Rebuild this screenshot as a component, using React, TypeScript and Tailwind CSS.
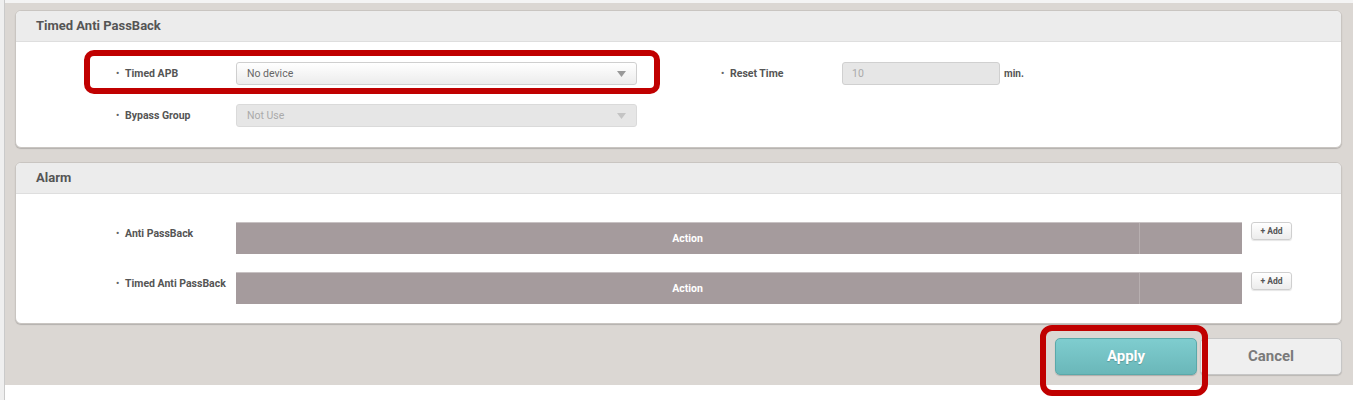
import React from "react";

const Arrow = ({ color }: { color: string }) => (
  <svg width="9" height="6" viewBox="0 0 9 6">
    <path d="M0 0 L9 0 L4.5 6 Z" fill={color} />
  </svg>
);

const Label = ({ text, w }: { text: string; w: string }) => (
  <div className={`flex items-center ${w} shrink-0 text-[10.5px] font-bold text-[#555]`}>
    <span className="w-[9px] text-[9px] text-[#666]">•</span>
    <span>{text}</span>
  </div>
);

const Panel = ({ title, children }: { title: string; children: React.ReactNode }) => (
  <div className="rounded-[6px] border border-[#c9c5c1] bg-white shadow-[0_1px_1px_rgba(0,0,0,0.18)] overflow-hidden">
    <div className="h-[31px] bg-[#ececec] border-b border-[#dedede] flex items-center pl-[20px] text-[13px] font-bold text-[#555]">
      {title}
    </div>
    {children}
  </div>
);

const AlarmRow = ({ label }: { label: string }) => (
  <div className="flex items-start">
    <div className="w-[100px] shrink-0" />
    <div className="h-[24px] flex items-center">
      <Label text={label} w="w-[120px]" />
    </div>
    <div className="w-[1006px] h-[32px] flex bg-[#a59b9d] border-t border-[#c8c2c3] text-white text-[10.5px] font-bold">
      <div className="w-[904px] flex items-center justify-center border-r border-[#b7afb0]">Action</div>
      <div className="flex-1" />
    </div>
    <button className="ml-[9px] w-[41px] h-[18px] rounded-[3px] border border-[#cfcfcf] bg-gradient-to-b from-white to-[#ececec] text-[8.5px] font-bold text-[#555] flex items-center justify-center shadow-[0_1px_1px_rgba(0,0,0,0.1)]">
      + Add
    </button>
  </div>
);

export default function App() {
  return (
    <div className="relative w-[1353px] h-[400px] bg-white flex" style={{ fontFamily: "Roboto, 'Liberation Sans', sans-serif" }}>
      <div className="w-[5px] h-full bg-[#efefef] border-r border-[#cacaca] shrink-0" />
      <div className="flex-1 flex flex-col">
        <div className="h-[3px] bg-[#f4f4f4]" />
        <div className="bg-[#dbd7d3] pl-[10px] pr-[11px] pt-[7px] pb-[10px] flex flex-col">
          <Panel title="Timed Anti PassBack">
            <div className="pt-[20px] pb-[20px] flex flex-col gap-[19px]">
              <div className="flex items-center">
                <div className="w-[100px] shrink-0" />
                <Label text="Timed APB" w="w-[120px]" />
                <div className="w-[401px] h-[23px] rounded-[3px] border border-[#cfcfcf] bg-gradient-to-b from-white to-[#ececec] flex items-center justify-between pl-[10px] pr-[10px] text-[10.5px] text-[#666]">
                  <span>No device</span>
                  <Arrow color="#999" />
                </div>
                <div className="w-[84px] shrink-0" />
                <Label text="Reset Time" w="w-[121px]" />
                <div className="w-[158px] h-[23px] rounded-[3px] border border-[#d0d0d0] bg-[#e6e6e6] flex items-center pl-[9px] text-[10.5px] text-[#aaa]">
                  10
                </div>
                <span className="ml-[4px] text-[10px] font-bold text-[#555]">min.</span>
              </div>
              <div className="flex items-center">
                <div className="w-[100px] shrink-0" />
                <Label text="Bypass Group" w="w-[120px]" />
                <div className="w-[401px] h-[23px] rounded-[3px] border border-[#dadada] bg-[#e6e6e6] flex items-center justify-between pl-[10px] pr-[10px] text-[10.5px] text-[#aaa]">
                  <span>Not Use</span>
                  <Arrow color="#c4c4c4" />
                </div>
              </div>
            </div>
          </Panel>
          <div className="h-[14px]" />
          <Panel title="Alarm">
            <div className="pt-[28px] pb-[19px] flex flex-col gap-[18px]">
              <AlarmRow label="Anti PassBack" />
              <AlarmRow label="Timed Anti PassBack" />
            </div>
          </Panel>
          <div className="flex justify-end gap-[3px] mt-[14px]">
            <button className="w-[142px] h-[37px] rounded-[5px] border border-[#5aa9aa] bg-gradient-to-b from-[#7fcdcf] to-[#6ab7b9] text-white text-[15px] font-bold [text-shadow:0_1px_1px_rgba(0,0,0,0.2)] shadow-[0_1px_1px_rgba(0,0,0,0.2)]">
              Apply
            </button>
            <button className="w-[142px] h-[37px] rounded-[5px] border border-[#c6c6c6] bg-[#efefef] text-[#7a7a7a] text-[15px] font-bold shadow-[0_1px_1px_rgba(0,0,0,0.15)]">
              Cancel
            </button>
          </div>
        </div>
      </div>
      <div className="absolute left-[84px] top-[50px] w-[576px] h-[44px] border-[6px] border-[#c00000] rounded-[10px]" />
      <div className="absolute left-[1040px] top-[325px] w-[168px] h-[71px] border-[6px] border-[#c00000] rounded-[12px]" />
    </div>
  );
}
